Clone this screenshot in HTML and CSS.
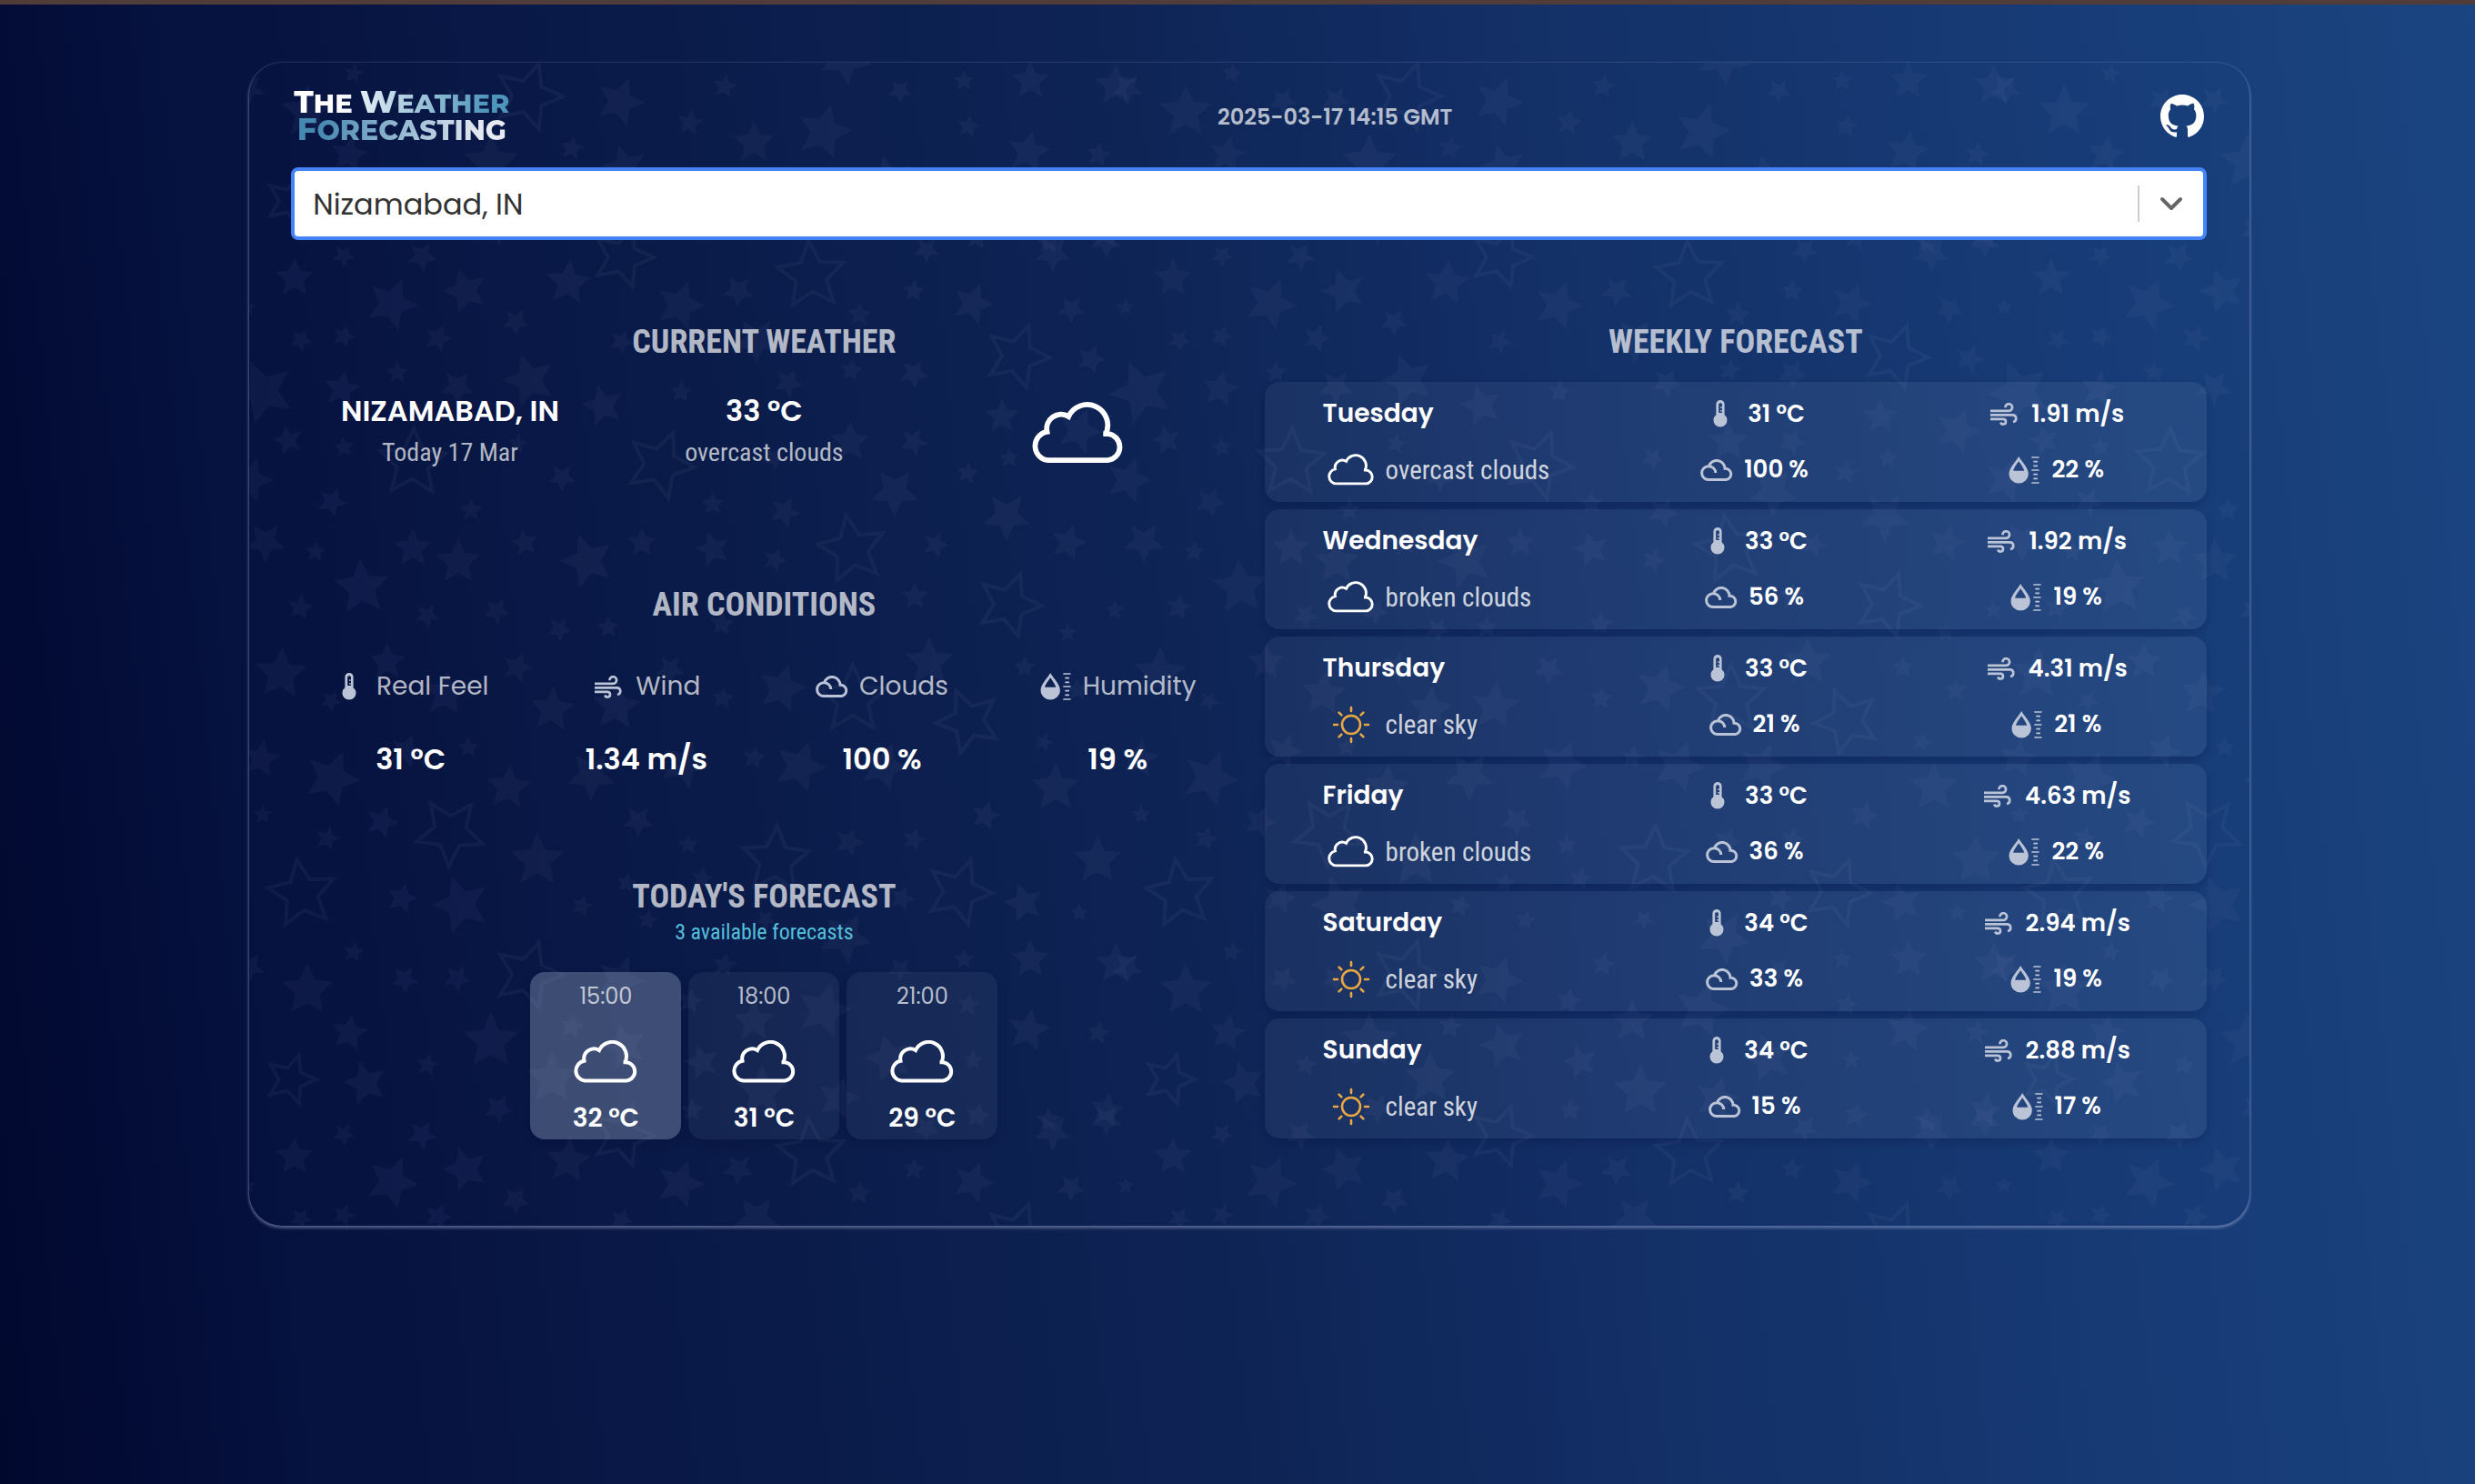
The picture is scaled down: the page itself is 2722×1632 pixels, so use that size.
FILE: index.html
```html
<!DOCTYPE html>
<html lang="en">
<head>
<meta charset="utf-8">
<meta name="viewport" content="width=device-width, initial-scale=1">
<title>The Weather Forecasting</title>
<link rel="stylesheet" href="styles.css">
</head>
<body>
<svg class="sprite" aria-hidden="true">
  <symbol id="i-cloud" viewBox="0 0 71 47"><path d="M12.5 44.5A11 11 0 0 1 11.5 22.7A11 11 0 0 1 28 11A15.6 15.6 0 0 1 56.5 24.2H54.5H58A10.2 10.2 0 0 1 58 44.5Z" fill="none" stroke="currentColor" stroke-width="4"/></symbol>
  <symbol id="i-sun" viewBox="0 0 42 42"><g fill="none" stroke="currentColor" stroke-width="2.6" stroke-linecap="round"><circle cx="21" cy="21" r="10"/><path d="M21 2v4M21 36v4M2 21h4M36 21h4M7.6 7.6l2.8 2.8M31.6 31.6l2.8 2.8M7.6 34.4l2.8-2.8M31.6 10.4l2.8-2.8"/></g></symbol>
  <symbol id="i-temp" viewBox="0 0 16 30"><path fill="currentColor" fill-rule="evenodd" d="M8 0a4.6 4.6 0 0 1 4.6 4.6v11.6a7.5 7.5 0 1 1-9.2 0V4.6A4.6 4.6 0 0 1 8 0zM6.2 4v10h3.8v-1.5H8V11.2h2V8.8H8V7.5h2V4.5L8.5 3z"/></symbol>
  <symbol id="i-wind" viewBox="0 0 30 25"><g fill="none" stroke="currentColor" stroke-width="2.7"><path d="M0 8.8H20.5A3.8 3.8 0 1 0 16.5 5.2"/><path d="M0 13.3H25A3.9 3.9 0 0 1 25 21"/><path d="M0 17.8H14.5A2.9 2.9 0 1 1 11.3 21.5"/></g></symbol>
  <symbol id="i-clouds" viewBox="0 0 36 24"><path fill="none" stroke="currentColor" stroke-width="3" d="M16.8 15A7.6 7.4 0 1 0 9.5 22.5H28.5A6.2 6.2 0 0 0 27 10.2A9 9 0 0 0 9.5 7.5"/></symbol>
  <symbol id="i-hum" viewBox="0 0 32 29"><path fill="currentColor" fill-rule="evenodd" d="M10.4 0C13 5 20.7 12 20.7 18.5a10.3 10 0 0 1-20.6 0C.1 12 7.8 5 10.4 0zM10.4 5C8 8.5 5 12 4.5 15.2h11.8C15.5 12 12.8 8.5 10.4 5z"/><path stroke="currentColor" stroke-width="1.6" d="M24 1h8M26 5.5h4.500M26 10h4.500M24 14.500h8M26 19h4.500M26 23.500h4.500M24 28h8"/></symbol>
</svg>

<main class="panel">
  <svg class="stars" id="stars" aria-hidden="true"></svg>

  <header class="top">
    <h1 class="logo"><span class="logo-a"><b>T</b>HE <b>W</b>EATHER</span><span class="logo-b"><b>F</b>ORECASTING</span></h1>
    <time class="stamp">2025-03-17 14:15 GMT</time>
    <a class="github" href="#" aria-label="GitHub"><svg viewBox="0 0 16 16"><path fill="currentColor" d="M8 0C3.58 0 0 3.58 0 8c0 3.54 2.29 6.53 5.47 7.59.4.07.55-.17.55-.38 0-.19-.01-.82-.01-1.49-2.01.37-2.53-.49-2.69-.94-.09-.23-.48-.94-.82-1.13-.28-.15-.68-.52-.01-.53.63-.01 1.08.58 1.23.82.72 1.21 1.87.87 2.33.66.07-.52.28-.87.51-1.07-1.78-.2-3.64-.89-3.64-3.95 0-.87.31-1.59.82-2.15-.08-.2-.36-1.02.08-2.12 0 0 .67-.21 2.2.82.64-.18 1.32-.27 2-.27s1.36.09 2 .27c1.53-1.04 2.2-.82 2.2-.82.44 1.1.16 1.92.08 2.12.51.56.82 1.27.82 2.15 0 3.07-1.87 3.75-3.65 3.95.29.25.54.73.54 1.48 0 1.07-.01 1.93-.01 2.2 0 .21.15.46.55.38A8.01 8.01 0 0 0 16 8c0-4.42-3.58-8-8-8z"/></svg></a>
  </header>

  <div class="search">
    <select id="city" aria-label="City"><option>Nizamabad, IN</option></select>
    <span class="search-end" aria-hidden="true"><svg viewBox="0 0 26 16"><path d="M3 3l10 10L23 3" fill="none" stroke="currentColor" stroke-width="4" stroke-linecap="round" stroke-linejoin="round"/></svg></span>
  </div>

  <div class="columns">
    <div class="left">
      <section class="current">
        <h2>CURRENT WEATHER</h2>
        <div class="now">
          <div><p class="strong">NIZAMABAD, IN</p><p class="soft">Today 17 Mar</p></div>
          <div><p class="strong">33 °C</p><p class="soft">overcast clouds</p></div>
          <svg class="now-icon"><use href="#i-cloud"/></svg>
        </div>
      </section>
      <section class="air">
        <h2>AIR CONDITIONS</h2>
        <dl class="air-grid">
          <div><dt class="label"><svg class="ic"><use href="#i-temp"/></svg>Real Feel</dt><dd class="strong">31 °C</dd></div>
          <div><dt class="label"><svg class="ic ic-wind"><use href="#i-wind"/></svg>Wind</dt><dd class="strong">1.34 m/s</dd></div>
          <div><dt class="label"><svg class="ic ic-clouds"><use href="#i-clouds"/></svg>Clouds</dt><dd class="strong">100 %</dd></div>
          <div><dt class="label"><svg class="ic"><use href="#i-hum"/></svg>Humidity</dt><dd class="strong">19 %</dd></div>
        </dl>
      </section>
      <section class="today">
        <h2>TODAY'S FORECAST</h2>
        <p class="count">3 available forecasts</p>
        <ul class="hours">
          <li class="on"><span>15:00</span><svg><use href="#i-cloud"/></svg><b>32 °C</b></li>
          <li><span>18:00</span><svg><use href="#i-cloud"/></svg><b>31 °C</b></li>
          <li><span>21:00</span><svg><use href="#i-cloud"/></svg><b>29 °C</b></li>
        </ul>
      </section>
    </div>

    <section class="week">
      <h2>WEEKLY FORECAST</h2>
      <ul class="days">
        <li><h3>Tuesday</h3><p class="val"><svg class="ic"><use href="#i-temp"/></svg>31 °C</p><p class="val"><svg class="ic ic-wind"><use href="#i-wind"/></svg>1.91 m/s</p><p class="desc"><svg class="d-cloud"><use href="#i-cloud"/></svg>overcast clouds</p><p class="val"><svg class="ic ic-clouds"><use href="#i-clouds"/></svg>100 %</p><p class="val"><svg class="ic"><use href="#i-hum"/></svg>22 %</p></li>
        <li><h3>Wednesday</h3><p class="val"><svg class="ic"><use href="#i-temp"/></svg>33 °C</p><p class="val"><svg class="ic ic-wind"><use href="#i-wind"/></svg>1.92 m/s</p><p class="desc"><svg class="d-cloud"><use href="#i-cloud"/></svg>broken clouds</p><p class="val"><svg class="ic ic-clouds"><use href="#i-clouds"/></svg>56 %</p><p class="val"><svg class="ic"><use href="#i-hum"/></svg>19 %</p></li>
        <li><h3>Thursday</h3><p class="val"><svg class="ic"><use href="#i-temp"/></svg>33 °C</p><p class="val"><svg class="ic ic-wind"><use href="#i-wind"/></svg>4.31 m/s</p><p class="desc"><svg class="d-sun"><use href="#i-sun"/></svg>clear sky</p><p class="val"><svg class="ic ic-clouds"><use href="#i-clouds"/></svg>21 %</p><p class="val"><svg class="ic"><use href="#i-hum"/></svg>21 %</p></li>
        <li><h3>Friday</h3><p class="val"><svg class="ic"><use href="#i-temp"/></svg>33 °C</p><p class="val"><svg class="ic ic-wind"><use href="#i-wind"/></svg>4.63 m/s</p><p class="desc"><svg class="d-cloud"><use href="#i-cloud"/></svg>broken clouds</p><p class="val"><svg class="ic ic-clouds"><use href="#i-clouds"/></svg>36 %</p><p class="val"><svg class="ic"><use href="#i-hum"/></svg>22 %</p></li>
        <li><h3>Saturday</h3><p class="val"><svg class="ic"><use href="#i-temp"/></svg>34 °C</p><p class="val"><svg class="ic ic-wind"><use href="#i-wind"/></svg>2.94 m/s</p><p class="desc"><svg class="d-sun"><use href="#i-sun"/></svg>clear sky</p><p class="val"><svg class="ic ic-clouds"><use href="#i-clouds"/></svg>33 %</p><p class="val"><svg class="ic"><use href="#i-hum"/></svg>19 %</p></li>
        <li><h3>Sunday</h3><p class="val"><svg class="ic"><use href="#i-temp"/></svg>34 °C</p><p class="val"><svg class="ic ic-wind"><use href="#i-wind"/></svg>2.88 m/s</p><p class="desc"><svg class="d-sun"><use href="#i-sun"/></svg>clear sky</p><p class="val"><svg class="ic ic-clouds"><use href="#i-clouds"/></svg>15 %</p><p class="val"><svg class="ic"><use href="#i-hum"/></svg>17 %</p></li>
      </ul>
    </section>
  </div>
</main>
<script src="stars.js"></script>
</body>
</html>
```
FILE: styles.css
```css
:root {
  --round: Poppins, Inter, "Open Sans", sans-serif;
  --narrow: "Roboto Condensed", "Liberation Sans Narrow", "DejaVu Sans Condensed", sans-serif;
  --mute: rgba(255, 255, 255, .7);
}
* { box-sizing: border-box; margin: 0; padding: 0; }
body {
  min-height: 100vh;
  border-top: 5px solid #503c38;
  background: linear-gradient(84deg, #01082e 0%, #061240 13%, #0a1b49 30%, #0e2455 48%, #133067 64%, #173a75 82%, #1a4580 100%);
  color: #fff;
  font-family: var(--round);
  overflow-x: hidden;
}
ul { list-style: none; }
.sprite { position: absolute; width: 0; height: 0; }

.panel {
  position: relative;
  margin: 64px calc(9% + 3px) 60px calc(10% + 2px);
  padding: 32px 47px 95px 46px;
  border-radius: 36px;
  box-shadow: 0 2px 3px 1px rgba(190, 198, 235, .34), 0 0 2px 1px rgba(190, 198, 235, .12);
}
.stars { position: absolute; inset: 0; width: 100%; height: 100%; border-radius: 36px; }
.panel > :not(.stars) { position: relative; }

.top { display: flex; align-items: center; justify-content: space-between; height: 54px; padding: 0 3px; }
.logo { display: grid; justify-items: center; font: 800 29px/28px Montserrat, Poppins, sans-serif; }
.logo b { font-size: 34px; font-weight: 800; }
.logo span { color: transparent; background-clip: text; -webkit-background-clip: text; }
.logo-a { background-image: linear-gradient(90deg, #fff 20%, #4e95bb 90%); }
.logo .logo-b { font-size: 30px; background-image: linear-gradient(90deg, #4588b0 10%, #e8eaf2 90%); }
.stamp { font-size: 24px; font-weight: 600; color: var(--mute); }
.github { display: block; width: 48px; height: 48px; color: #fff; }
.github svg { display: block; width: 100%; height: 100%; }

.search {
  display: flex; align-items: center;
  height: 80px; margin-top: 29px;
  background: #fff; border: 4px solid #4584f8; border-radius: 8px;
}
.search select {
  flex: 1; height: 100%; padding: 0 20px;
  appearance: none; border: 0; outline: 0; background: none;
  font: 400 32px var(--round); color: #333;
}
.search-end { display: flex; align-items: center; justify-content: center; width: 72px; height: 40px; border-left: 2px solid #ccc; color: #666; pointer-events: none; }
.search-end svg { width: 26px; height: 16px; }

.columns { display: grid; grid-template-columns: 1fr 1fr; gap: 32px; margin-top: 88px; padding-left: 2px; }
h2 { font: 700 36px/48px var(--narrow); color: var(--mute); text-align: center; }

.now { display: grid; grid-template-columns: repeat(3, 1fr); justify-items: center; margin-top: 28px; text-align: center; }
.strong { font-size: 32px; font-weight: 600; line-height: 48px; }
.soft { font: 400 28px/44px var(--narrow); color: var(--mute); }
.now-icon { width: 102px; height: 68px; margin-top: 14px; }

.air { margin-top: 121px; }
.air-grid { display: grid; grid-template-columns: repeat(4, 1fr); margin-top: 46px; }
.air-grid > div { display: grid; justify-items: center; row-gap: 36px; }
.label { display: flex; align-items: center; gap: 12px; height: 40px; font-size: 28px; color: var(--mute); }
.ic { width: 36px; height: 30px; color: #bbc3d6; }
.ic-wind { height: 25px; }
.ic-clouds { height: 24px; }

.today { margin-top: 103px; text-align: center; }
.count { font: 400 24px/31px var(--narrow); color: #54c0dc; }
.hours { display: flex; justify-content: center; gap: 8px; margin-top: 28px; }
.hours li {
  display: flex; flex-direction: column; align-items: center; justify-content: space-between;
  width: 166px; height: 184px; padding: 11px 0 7px;
  border-radius: 16px; background: rgba(200, 220, 255, .06);
  box-shadow: 0 4px 10px rgba(2, 8, 50, .2);
}
.hours .on { background: rgba(170, 190, 215, .32); }
.hours span { font-size: 24px; line-height: 32px; color: var(--mute); }
.hours svg { width: 71px; height: 47px; margin-top: 8px; }
.hours b { font-size: 28px; font-weight: 600; line-height: 32px; }

.days { display: grid; gap: 8px; margin-top: 20px; }
.days li {
  display: grid; grid-template: 60px 63px / 36fr 32fr 32fr; align-items: center;
  padding: 5px 0 4px; border-radius: 16px;
  background: linear-gradient(90deg, rgba(200, 220, 255, .06), rgba(200, 220, 255, .08));
  box-shadow: 0 4px 8px rgba(2, 10, 60, .22);
}
h3 { padding-left: 64px; font-size: 28px; font-weight: 600; }
.desc { display: flex; align-items: center; gap: 12px; padding-left: 69px; font: 400 29px var(--narrow); color: rgba(255, 255, 255, .8); }
.desc svg { width: 52px; color: #fff; }
.d-cloud { height: 35px; }
.desc .d-sun { height: 42px; color: #e9a840; }
.val { display: flex; align-items: center; justify-content: center; gap: 12px; font-size: 26px; font-weight: 600; }
```
FILE: stars.js
```js
// Star field: one 966px tile repeated over the panel. Each entry is x, y, radius, rotation.
const TILE = 966;
const solid = [
  [106,15,13,32],[192,16,17,30],[52,40,22,0],[159,68,30,23],[240,54,26,-18],[353,45,26,5],[476,70,28,18],[540,54,18,40],
  [747,9,15,36],[733,54,13,5],[798,68,24,20],[295,88,16,34],[59,108,13,30],[106,104,13,20],[210,106,16,20],[411,110,14,25],
  [560,108,26,36],[673,80,14,5],[165,144,13,0],[0,72,10,0],[17,165,36,-22],[104,162,21,10],[231,160,20,36],[310,152,30,-18],
  [391,180,24,-14],[477,165,13,5],[595,155,17,30],[664,141,13,10],[733,145,17,30],[45,218,17,-15],[106,226,12,-5],[297,222,12,10],
  [3,262,26,18],[346,259,16,35],[93,286,17,25],[663,220,23,0],[733,220,16,25],[712,275,28,36],[580,238,13,30],[246,295,13,0],
  [512,288,13,0],[591,297,18,25],[20,330,23,36],[182,337,22,0],[232,352,26,0],[305,331,16,-10],[374,351,31,-18],[434,331,17,0],
  [512,338,20,-15],[75,341,12,5],[126,380,32,-4],[580,350,14,20],[757,333,15,20],[58,402,15,10],[198,411,14,30],[274,406,15,30],
  [343,426,14,30],[397,424,13,0],[522,420,14,5],[734,390,16,0],[37,475,30,3],[154,462,21,0],[297,468,18,20],[465,470,17,36],
  [750,462,28,0],[588,491,28,15],[218,497,26,5],[335,514,26,5],[406,511,28,5],[523,502,13,5],[92,505,12,30],[15,568,22,10],
  [93,590,32,22],[175,560,20,20],[243,556,12,0],[287,600,26,5],[378,587,28,36],[480,575,28,22],[557,567,13,10],[608,577,30,20],
  [700,577,28,20],[17,630,11,0],[148,638,19,20],[88,656,14,15],[319,680,31,0],[170,722,18,15],[235,729,33,-18],[430,637,18,36],
  [485,663,12,0],[368,730,13,15],[440,746,12,10],[662,660,17,20],[733,657,14,15],[720,722,15,20],[658,765,30,30],[417,705,12,10],
  [500,700,13,10],[570,745,12,36],[117,781,12,10],[2,798,18,36],[66,823,30,0],[173,811,16,30],[231,810,16,30],[410,812,28,20],
  [525,795,14,10],[718,800,14,36],[112,870,21,10],[268,879,32,0],[357,863,14,10],[415,884,26,-15],[130,925,25,-15],[198,905,13,10],
  [276,953,17,30],[335,920,30,0],[487,835,15,10],[557,857,24,0],[634,845,32,15],[500,902,20,-15],[706,898,28,-15],[566,934,30,0],
  [650,942,25,15],[489,955,13,0],[793,839,13,10],[798,900,12,0],[803,961,15,10],[886,13,21,36],[945,0,18,36],[906,74,16,36],
  [928,129,17,20],[830,192,20,0],[838,238,12,0],[792,254,13,10],[915,208,26,20],[835,302,28,36],[903,331,21,15],[954,405,11,0],
  [902,430,11,0],[855,468,13,0],[876,550,11,20],[889,600,28,0],[812,631,17,15],[935,680,28,0],[854,727,23,-15],[915,738,11,0],
  [861,789,22,0],[955,794,24,0],[859,867,25,10],[936,870,14,10],[945,955,20,10],[788,789,12,0],[881,966,15,0],[913,493,13,0]
];
const outlined = [
  [413,17,34,18],[620,37,38,-4],[182,243,38,2],[454,245,38,22],[665,338,38,-10],[666,503,38,0],[793,527,36,-22],[223,649,38,38],
  [60,717,38,-8],[581,680,38,3],[783,715,37,20],[309,806,38,18],[48,921,28,18],[847,126,36,20],[838,399,36,20]
];
function star([x, y, r, turn]) {
  const points = [];
  for (let i = 0; i < 10; i++) {
    const a = (turn + i * 36) * Math.PI / 180;
    const d = i % 2 ? r * 0.47 : r;
    points.push((x + d * Math.sin(a)).toFixed(1) + " " + (y - d * Math.cos(a)).toFixed(1));
  }
  return "M" + points.join("L") + "Z";
}
let out = `<defs><g id="tile"><path fill="#9496cc" fill-opacity=".06" d="${solid.map(star).join("")}"/>` +
  `<path fill="none" stroke="#9496cc" stroke-opacity=".07" stroke-width="4" d="${outlined.map(star).join("")}"/></g></defs>`;
for (let y = -769; y < 2400; y += TILE) {
  for (let x = -2; x < 2900; x += TILE) out += `<use href="#tile" x="${x}" y="${y}"/>`;
}
document.getElementById("stars").innerHTML = out;
```
